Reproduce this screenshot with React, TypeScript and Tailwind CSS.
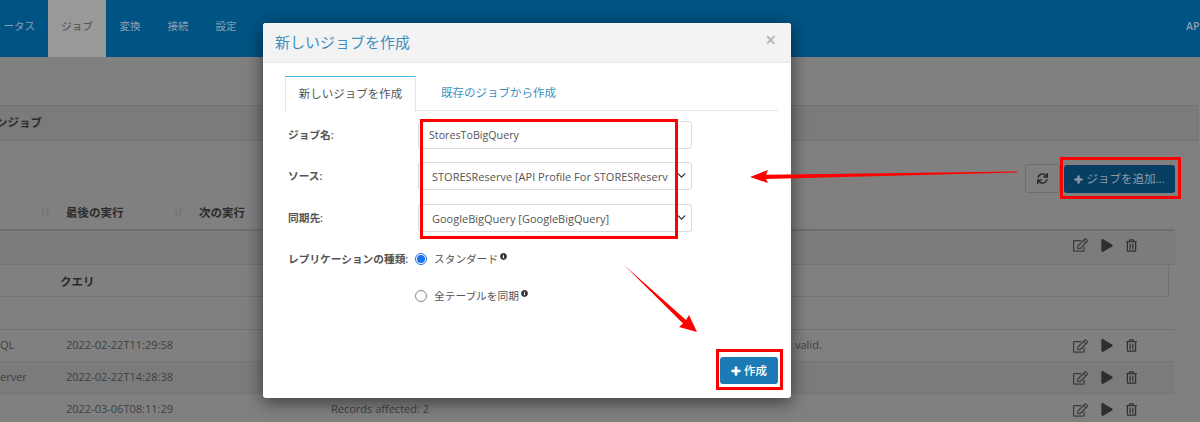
import { ArrowDownUp, ChevronDown } from 'lucide-react'
import { FaInfoCircle, FaPlay, FaPlus, FaRegEdit, FaRegTrashAlt, FaSync } from 'react-icons/fa'

const FONT = "font-['Open_Sans','Noto_Sans_CJK_JP',sans-serif]"

const NAV_ITEMS = ['変換', '接続', '設定']

const ROWS = [
    { source: 'QL', time: '2022-02-22T11:29:58', result: '', tail: 'valid.', shade: false },
    { source: 'erver', time: '2022-02-22T14:28:38', result: '', tail: '', shade: true },
    { source: '', time: '2022-03-06T08:11:29', result: 'Records affected: 2', tail: '', shade: false },
]

function RowActions() {
    return (
        <div className="flex items-center gap-[13px] text-[#2e2e2e]">
            <FaRegEdit className="h-[14px] w-[15px] text-[#3c3c3c]" />
            <FaPlay className="h-[13px] w-[12px]" />
            <FaRegTrashAlt className="h-[13px] w-[11px]" />
        </div>
    )
}

function Background() {
    return (
        <div className="flex h-[422px] flex-col overflow-hidden bg-[#808080] text-[#3b3b3b]">
            <nav className="flex h-[57px] shrink-0 items-center justify-between bg-[#005484] text-[10.5px] text-[#8c9eb0]">
                <div className="flex h-full items-center">
                    <span className="w-[48px] pb-[3px] pr-[13px] text-right">ータス</span>
                    <span className="flex h-full w-[58px] items-center justify-center bg-[#999999] pb-[3px] text-[#4c4c4c]">
                        ジョブ
                    </span>
                    <div className="flex">
                        {NAV_ITEMS.map((item) => (
                            <span key={item} className="w-[48px] pb-[3px] text-center">
                                {item}
                            </span>
                        ))}
                    </div>
                </div>
                <span className="w-[14px] overflow-hidden pb-[3px] font-semibold">AP</span>
            </nav>

            <div className="mr-[2px] mt-[48px] flex h-[36px] shrink-0 items-center border-y border-r border-[#727272] bg-[#7b7b7b] text-[11.5px] font-bold text-[#2b2b2b]">
                <span className="-ml-[4px]">ンジョブ</span>
            </div>

            <div className="mr-[25px] flex h-[52px] shrink-0 items-end justify-end gap-[4px]">
                <button className="flex h-[29px] w-[35px] items-center justify-center rounded-[3px] border border-[#6e6e6e] text-[#2b2b2b]">
                    <FaSync className="h-[11px] w-[11px]" />
                </button>
                <button className="flex h-[28px] w-[111px] items-center justify-center gap-[3px] rounded-[3px] bg-[#073f63] text-[11.5px] text-[#8d9aa5]">
                    <FaPlus className="h-[9px] w-[9px] stroke-current stroke-[40]" />
                    ジョブを追加...
                </button>
            </div>

            <div className="mr-[25px] flex flex-col">
                <div className="flex h-[38px] shrink-0 items-center border-b-[2px] border-[#6f6f6f] pt-[3px] text-[11.5px] font-semibold text-[#2b2b2b]">
                    <ArrowDownUp className="ml-[40px] h-[11px] w-[11px] text-[#707070]" />
                    <span className="ml-[15px] w-[107px]">最後の実行</span>
                    <ArrowDownUp className="h-[11px] w-[11px] text-[#707070]" />
                    <span className="ml-[15px]">次の実行</span>
                </div>

                <div className="flex h-[34px] shrink-0 items-center justify-end border-b border-[#727272] bg-[#7c7c7c] pb-[5px] pr-[38px]">
                    <RowActions />
                </div>

                <div className="mr-[6px] flex h-[32px] shrink-0 items-center rounded-br-[3px] border-b border-r border-[#727272] pl-[60px] pt-[2px] text-[11.5px] font-semibold text-[#2b2b2b]">
                    クエリ
                </div>

                <div className="h-[33px] shrink-0 border-b border-[#727272]" />

                {ROWS.map((row) => (
                    <div
                        key={row.time}
                        className={`flex h-[32px] shrink-0 items-center border-b border-[#757575] pr-[38px] text-[11px] text-[#3f3f3f] ${row.shade ? 'bg-[#7b7b7b]' : ''}`}
                    >
                        <span className="w-[66px] overflow-hidden">{row.source}</span>
                        <span className="w-[265px]">{row.time}</span>
                        <span className="w-[464px]">{row.result}</span>
                        <span className="flex-1">{row.tail}</span>
                        <RowActions />
                    </div>
                ))}
            </div>
        </div>
    )
}

function SelectField({ value }: { value: string }) {
    return (
        <div className="flex h-[28px] w-[274px] items-center rounded-[3px] border border-[#dcdcdc] pl-[13px] pr-[3px] pt-[2px] text-[11px] text-[#555555]">
            <span className="whitespace-nowrap">{value}</span>
            <ChevronDown className="ml-auto h-[13px] w-[13px] -translate-y-[2px] text-[#333333]" strokeWidth={2.5} />
        </div>
    )
}

function Modal() {
    return (
        <div className="absolute left-[263px] top-[23px] h-[375px] w-[528px] rounded-[3px] bg-white shadow-[0_4px_18px_rgba(0,0,0,0.55)]">
            <header className="flex h-[40px] items-center justify-between rounded-t-[3px] border-b border-[#e5e5e5] bg-[#f3f3f3] pl-[12px] pr-[15px]">
                <h2 className="text-[15px] text-[#3f8fc0]">新しいジョブを作成</h2>
                <span className="pb-[4px] text-[19px] font-semibold leading-none text-[#b5b5b5]">×</span>
            </header>

            <div className="ml-[22px] mr-[13px] mt-[13px] flex h-[35px] border-b border-[#e5e5e5] text-[11.5px]">
                <div className="flex h-[35px] w-[131px] items-center justify-center border-x border-t border-x-[#e5e5e5] border-t-[#4db4e8] bg-white text-[#555555]">
                    新しいジョブを作成
                </div>
                <div className="ml-[25px] flex h-[34px] items-center text-[#3f8fc0]">既存のジョブから作成</div>
            </div>

            <div className="ml-[25px] mt-[10px] flex flex-col text-[10.7px] text-[#555555]">
                <div className="flex h-[28px] items-center">
                    <label className="w-[130px] font-semibold">ジョブ名:</label>
                    <div className="flex h-[28px] w-[274px] items-center rounded-[3px] border border-[#dcdcdc] pl-[10px] pt-[1px] text-[10.7px]">
                        StoresToBigQuery
                    </div>
                </div>
                <div className="mt-[13px] flex h-[28px] items-center">
                    <label className="w-[130px] font-semibold">ソース:</label>
                    <SelectField value="STORESReserve [API Profile For STORESReserv" />
                </div>
                <div className="mt-[14px] flex h-[28px] items-center">
                    <label className="w-[130px] font-semibold">同期先:</label>
                    <SelectField value="GoogleBigQuery [GoogleBigQuery]" />
                </div>
                <div className="mt-[14px] flex h-[26px] items-center">
                    <label className="w-[127px] whitespace-nowrap font-semibold">レプリケーションの種類:</label>
                    <span className="flex h-[12px] w-[12px] items-center justify-center rounded-full border border-[#1a73e8]">
                        <span className="h-[8px] w-[8px] rounded-full bg-[#1a73e8]" />
                    </span>
                    <span className="ml-[7px]">スタンダード</span>
                    <FaInfoCircle className="mb-[5px] ml-[2px] h-[7px] w-[7px] text-[#333333]" />
                </div>
                <div className="mt-[11px] flex h-[26px] items-center pl-[127px]">
                    <span className="h-[12px] w-[12px] rounded-full border border-[#8a8a8a]" />
                    <span className="ml-[7px]">全テーブルを同期</span>
                    <FaInfoCircle className="mb-[5px] ml-[2px] h-[7px] w-[7px] text-[#333333]" />
                </div>
            </div>

            <button className="absolute left-[457px] top-[334px] flex h-[27px] w-[58px] items-center justify-center gap-[3px] rounded-[3px] bg-[#1c7ab5] text-[11.5px] font-medium text-white">
                <FaPlus className="h-[10px] w-[10px] stroke-current stroke-[40]" />
                作成
            </button>
        </div>
    )
}

function Annotations() {
    return (
        <>
            <div className="absolute left-[420px] top-[119px] h-[120px] w-[258px] border-[3px] border-[#ff0000]" />
            <div className="absolute left-[716px] top-[349px] h-[41px] w-[67px] border-[3px] border-[#ff0000]" />
            <div className="absolute left-[1060px] top-[157px] h-[42px] w-[121px] border-[3px] border-[#ff0000]" />
            <svg className="absolute left-0 top-0" width="1200" height="422" fill="#ff0000">
                <polygon points="1017,171.5 766,174.8 768,170 750,177 768,183 766,179 1017,172.5" />
                <polygon points="624,265 686,320 689,315 697,332 679,327 683,323.5" />
            </svg>
        </>
    )
}

export default function App() {
    return (
        <div className={`relative h-[422px] w-[1200px] overflow-hidden ${FONT}`}>
            <Background />
            <Modal />
            <Annotations />
        </div>
    )
}
